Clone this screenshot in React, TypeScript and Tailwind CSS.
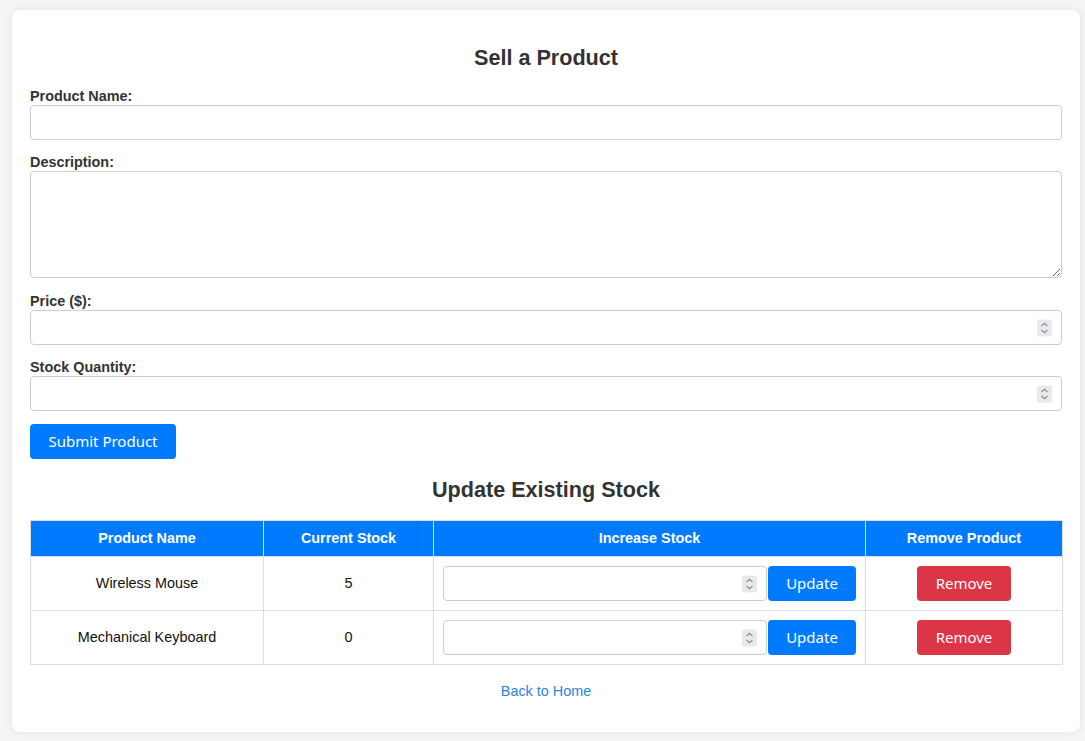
import React from "react";

const rows = [
  { name: "Wireless Mouse", stock: 5 },
  { name: "Mechanical Keyboard", stock: 0 },
];

function Field({ label, last, children }: { label: string; last?: boolean; children: React.ReactNode }) {
  return (
    <div className={last ? "mb-[14px]" : "mb-[13px]"}>
      <label className="block text-[14.4px] font-bold leading-[18px] text-[#333]">{label}</label>
      {children}
    </div>
  );
}

// headless chrome hides the native spin buttons until hover, so they are drawn
function Spinner() {
  return (
    <span className="pointer-events-none absolute right-[10px] top-1/2 flex h-[17px] w-[15px] -translate-y-1/2 items-center justify-center rounded-[2px] bg-[#e9e9ed]">
      <svg width="9" height="13" viewBox="0 0 9 13" fill="none" stroke="#8a8a8f" strokeWidth="1.1">
        <path d="M1.5 4.5 L4.5 1.8 L7.5 4.5" />
        <path d="M1.5 8.5 L4.5 11.2 L7.5 8.5" />
      </svg>
    </span>
  );
}

function NumberInput({ className }: { className: string }) {
  return (
    <div className={"relative " + className}>
      <input
        type="number"
        className="block h-[35px] w-full rounded-[4px] border border-[#ccc] bg-white px-2 text-[14px] outline-none [appearance:textfield] [&::-webkit-inner-spin-button]:appearance-none"
      />
      <Spinner />
    </div>
  );
}

const btnFont = "font-['Noto_Sans',sans-serif] text-[15px] text-white";

export default function App() {
  return (
    <div className="min-h-[741px] bg-[#f4f5f7] pt-[10px] font-['Liberation_Sans',Arial,sans-serif]">
      <div className="ml-[12px] w-[1068px] rounded-[8px] bg-white px-[18px] pb-[32px] pt-[35px] shadow-[0_0_8px_rgba(0,0,0,0.08)]">
        <h2 className="mb-[17px] text-center text-[21.6px] font-bold leading-[25px] text-[#333]">
          Sell a Product
        </h2>

        <Field label="Product Name:">
          <input type="text" className="block h-[35px] w-full rounded-[4px] border border-[#ccc] bg-white px-2 text-[14px] outline-none" />
        </Field>
        <Field label="Description:" last>
          <textarea
            rows={4}
            className="block h-[107px] w-full rounded-[4px] border border-[#ccc] bg-white p-2 text-[14px] outline-none"
          />
        </Field>
        <Field label="Price ($):">
          <NumberInput className="w-full" />
        </Field>
        <Field label="Stock Quantity:">
          <NumberInput className="w-full" />
        </Field>

        <button className={"h-[35px] w-[146px] rounded-[4px] bg-[#007bff] " + btnFont}>Submit Product</button>

        <h2 className="my-[18px] text-center text-[21.6px] font-bold leading-[25px] text-[#333]">
          Update Existing Stock
        </h2>

        <table className="w-full table-fixed border-collapse text-[14.4px]">
          <colgroup>
            <col className="w-[233px]" />
            <col className="w-[170px]" />
            <col className="w-[432px]" />
            <col className="w-[197px]" />
          </colgroup>
          <thead>
            <tr className="h-[36px] bg-[#007bff] text-white">
              <th className="border border-[#ddd] font-bold">Product Name</th>
              <th className="relative border border-[#ddd] font-bold">
                Current Stock
                <span className="absolute right-[15px] top-0 h-full w-px bg-[#1e67c4]" />
              </th>
              <th className="border border-[#ddd] font-bold">Increase Stock</th>
              <th className="border border-[#ddd] font-bold">Remove Product</th>
            </tr>
          </thead>
          <tbody>
            {rows.map((r) => (
              <tr key={r.name} className="h-[54px] text-[#111]">
                <td className="border border-[#ddd] text-center">{r.name}</td>
                <td className="border border-[#ddd] text-center">{r.stock}</td>
                <td className="border border-[#ddd] pl-[9px] pr-[9px]">
                  <div className="flex gap-px">
                    <NumberInput className="min-w-0 flex-1" />
                    <button className={"h-[35px] w-[88px] rounded-[4px] bg-[#007bff] " + btnFont}>Update</button>
                  </div>
                </td>
                <td className="border border-[#ddd] text-center">
                  <button className={"h-[35px] w-[94px] rounded-[4px] bg-[#dc3545] " + btnFont}>Remove</button>
                </td>
              </tr>
            ))}
          </tbody>
        </table>

        <div className="mt-[17px] text-center leading-[17px]">
          <a href="#" className="text-[14.4px] text-[#2a85dd]">
            Back to Home
          </a>
        </div>
      </div>
    </div>
  );
}
